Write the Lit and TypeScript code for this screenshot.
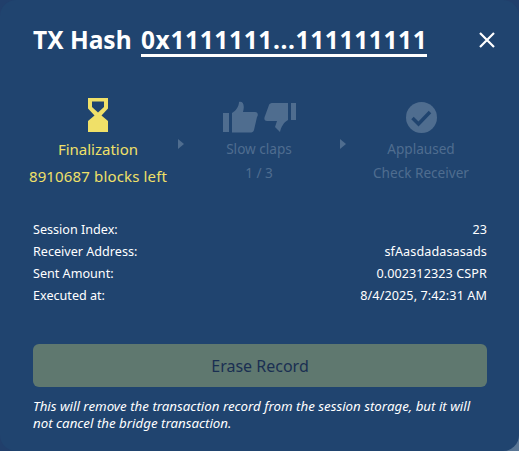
import { LitElement, html, css } from "lit";
import { customElement } from "lit/decorators.js";

const rows: [string, string][] = [
  ["Session Index:", "23"],
  ["Receiver Address:", "sfAasdadasasads"],
  ["Sent Amount:", "0.002312323 CSPR"],
  ["Executed at:", "8/4/2025, 7:42:31 AM"],
];

const arrow = html`<svg class="arrow" width="6" height="10" viewBox="0 0 6 10"><path d="M0 0L6 5L0 10Z" fill="#4f6d8f"/></svg>`;

@customElement("app-root")
export class AppRoot extends LitElement {
  static styles = css`
    :host { display: block; width: 519px; height: 451px; background: linear-gradient(135deg, #213f6b 75%, #5a7796 100%); font-family: "Noto Sans", "Open Sans", sans-serif; }
    .card { box-sizing: border-box; width: 519px; height: 451px; background: #20446f; border-radius: 16px; padding: 22px 32px 0 33px; display: flex; flex-direction: column; }
    .head { display: flex; justify-content: space-between; align-items: center; height: 36px; }
    h1 { margin: 0; color: #fff; font-size: 24.500px; font-weight: 700; line-height: 36px; white-space: nowrap; }
    .hash { border-bottom: 3px solid #fff; display: inline-block; line-height: 28px; letter-spacing: 0.640px; margin-left: 3px; }
    .close { width: 18px; height: 18px; display: block; margin-right: -9px; }
    .steps { display: flex; margin-top: 39px; margin-left: -15px; height: 93px; }
    .step { position: relative; flex: none; text-align: center; font-size: 13.600px; color: #4f6d8f; }
    .step.active { color: #f0e068; font-size: 15px; }
    .step .icon { height: 36px; display: flex; justify-content: center; align-items: flex-end; gap: 6px; }
    .step .t { line-height: 20px; margin-top: 6px; white-space: nowrap; }
    .step .s { line-height: 20px; margin-top: 4px; white-space: nowrap; }
    .active .s { margin-top: 7px; letter-spacing: 0.150px; }
    .s1 { width: 160px; }
    .s2 { width: 162px; }
    .s3 { width: 162px; }
    .arrow { position: absolute; right: -6px; top: 42px; }
    .info { margin-top: 29px; font-size: 12.600px; color: #fff; display: flex; flex-direction: column; }
    .row { display: flex; justify-content: space-between; line-height: 22px; }
    .row span:last-child { letter-spacing: 0.100px; }
    .btn { margin-top: 37px; height: 43px; background: #5f786f; border-radius: 6px; color: #1a2f52; font-size: 16px; display: flex; align-items: center; justify-content: center; }
    .note { margin: 11px 0 0; font-size: 13.300px; font-style: italic; color: #fff; line-height: 17px; }
  `;

  render() {
    return html`<div class="card">
      <div class="head">
        <h1>TX Hash <span class="hash">0x1111111...111111111</span></h1>
        <svg class="close" viewBox="0 0 18 18"><path d="M2 2L16 16M16 2L2 16" stroke="#fff" stroke-width="2.2" fill="none"/></svg>
      </div>
      <div class="steps">
        <div class="step active s1">
          <div class="icon"><svg width="22" height="36" viewBox="0 0 22 36"><path fill-rule="evenodd" d="M1 1H21V11.500L14.500 18.500L21 24V35H1V24L7.500 18.500L1 11.500ZM5 4.500V10L11 15.500L17 10V4.500Z" fill="#f0e068"/></svg></div>
          <div class="t">Finalization</div>
          <div class="s">8910687 blocks left</div>
          ${arrow}
        </div>
        <div class="step s2">
          <div class="icon">
            <svg width="35" height="32" viewBox="0 0 35 32"><path fill="#4f6d8f" d="M0 12H6V31H0ZM9 12C13 10 16 5 16 1C20 0 22 4 20 11H32C35 11 35.500 14 34 16L31 29C30.500 31 29 31.500 27 31.500H9Z"/></svg>
            <svg width="32" height="32" viewBox="0 0 32 32"><path fill="#4f6d8f" d="M27 2H32V19H27ZM24 2V19C20 21 17 26 16 31L11 26L13 20H3C0 20 0 17 1 15L5 4C5.500 2.500 7 2 9 2Z"/></svg>
          </div>
          <div class="t">Slow claps</div>
          <div class="s">1 / 3</div>
          ${arrow}
        </div>
        <div class="step s3">
          <div class="icon"><svg width="31" height="31" viewBox="0 0 31 31"><circle cx="15.500" cy="15.500" r="15.500" fill="#4f6d8f"/><path d="M6.500 16L12.500 22L24 10" stroke="#20446f" stroke-width="3.500" fill="none"/></svg></div>
          <div class="t">Applaused</div>
          <div class="s">Check Receiver</div>
        </div>
      </div>
      <div class="info">
        ${rows.map(([k, v]) => html`<div class="row"><span>${k}</span><span>${v}</span></div>`)}
      </div>
      <div class="btn">Erase Record</div>
      <p class="note">This will remove the transaction record from the session storage, but it will not cancel the bridge transaction.</p>
    </div>`;
  }
}
